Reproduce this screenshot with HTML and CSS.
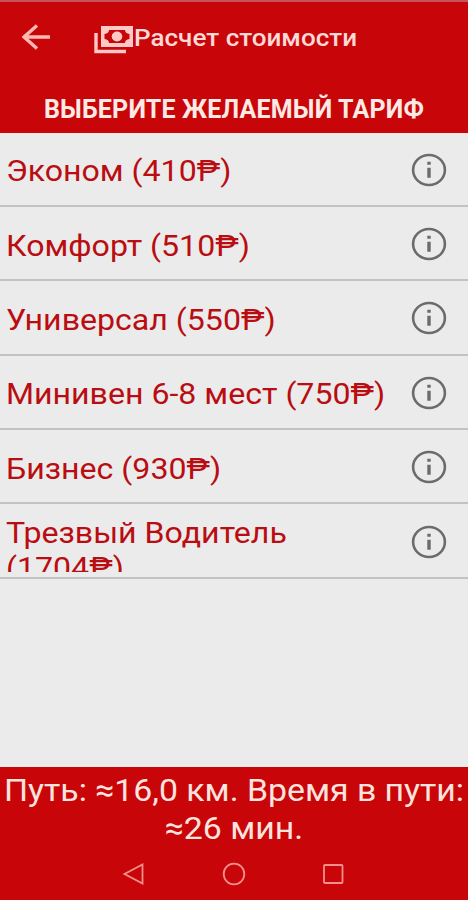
FILE: index.html
```html
<!DOCTYPE html>
<html lang="ru">
  <head>
    <meta charset="UTF-8" />
    <meta name="viewport" content="width=device-width, initial-scale=1.0" />
    <title>Расчет стоимости</title>
    <link rel="stylesheet" href="styles.css">
  </head>
  <body>
    <svg class="sprite" aria-hidden="true">
      <symbol id="info" viewBox="0 0 36 34">
        <ellipse cx="18" cy="17" rx="15.9" ry="15" fill="none" stroke="currentColor" stroke-width="2.6" />
        <path d="M16.3 14.8h3.4v10h-3.4zM16.3 8.800h3.4v3h-3.4z" fill="currentColor" />
      </symbol>
    </svg>

    <header class="toolbar">
      <svg class="back-icon" viewBox="0 0 28 26">
        <path d="M28 13H2M15 1.500L2 13l13 11.500" />
      </svg>
      <svg class="money-icon" viewBox="0 0 40 28">
        <path d="M2 7v18.500h30" fill="none" stroke="currentColor" stroke-width="3.4" />
        <path fill="currentColor" fill-rule="evenodd" d="M7 0h32v21H7zM15 4a5 4 0 0 1-4.500 4v5a5 4 0 0 1 4.500 4h16a5 4 0 0 1 4.500-4V8a5 4 0 0 1-4.500-4z" />
        <ellipse cx="23" cy="10.500" rx="5.300" ry="5" fill="currentColor" />
      </svg>
      <h1 class="title">Расчет стоимости</h1>
    </header>

    <h2 class="subtitle">ВЫБЕРИТЕ ЖЕЛАЕМЫЙ ТАРИФ</h2>

    <main class="tariffs">
      <div class="tariff">
        <div class="name">Эконом (410₱)</div>
        <svg class="info-icon"><use href="#info" /></svg>
      </div>
      <div class="tariff">
        <div class="name">Комфорт (510₱)</div>
        <svg class="info-icon"><use href="#info" /></svg>
      </div>
      <div class="tariff">
        <div class="name">Универсал (550₱)</div>
        <svg class="info-icon"><use href="#info" /></svg>
      </div>
      <div class="tariff">
        <div class="name">Минивен 6-8 мест (750₱)</div>
        <svg class="info-icon"><use href="#info" /></svg>
      </div>
      <div class="tariff">
        <div class="name">Бизнес (930₱)</div>
        <svg class="info-icon"><use href="#info" /></svg>
      </div>
      <div class="tariff">
        <div class="name name-long">Трезвый Водитель<br />(1704₱)</div>
        <svg class="info-icon"><use href="#info" /></svg>
      </div>
    </main>

    <footer class="summary">
      <p class="route">Путь: ≈16,0 км. Время в пути:<br />≈26 мин.</p>
      <nav class="system-nav">
        <svg viewBox="0 0 24 24"><path d="M20.500 2.500v19L2.500 12z" /></svg>
        <svg viewBox="0 0 24 24"><circle cx="12" cy="12" r="10.300" /></svg>
        <svg viewBox="0 0 24 24"><rect x="2" y="3" width="18.500" height="18" rx="1" /></svg>
      </nav>
    </footer>
  </body>
</html>
```
FILE: styles.css
```css
* {
  box-sizing: border-box;
}

body {
  margin: 0;
  height: 900px;
  display: flex;
  flex-direction: column;
  overflow: hidden;
  background-color: #ebebeb;
  font-family: Roboto, "Liberation Sans", sans-serif;
}

.sprite {
  display: none;
}

.toolbar {
  height: 74px;
  padding-left: 22px;
  display: flex;
  align-items: center;
  background-color: #c80508;
  border-top: 2px solid #c4545a;
  color: #ffd9d6;
}

.back-icon {
  width: 28px;
  height: 26px;
  margin-right: 44px;
  margin-bottom: 3px;
  fill: none;
  stroke: #ffb9b4;
  stroke-width: 3.4;
}

.money-icon {
  width: 40px;
  height: 28px;
  margin-top: 3px;
  color: #ffc9c6;
}

.title {
  margin: 0;
  font-size: 24px;
  font-weight: 500;
  line-height: 30px;
  white-space: nowrap;
  transform: scaleX(1.085);
  transform-origin: left;
}

.subtitle {
  margin: 0;
  height: 58.5px;
  padding-top: 21px;
  background-color: #c80508;
  color: #ffe9e4;
  font-size: 25px;
  font-weight: 700;
  line-height: 30px;
  letter-spacing: 0.18px;
  text-align: center;
  white-space: nowrap;
}

.tariffs {
  flex: 1;
}

.tariff {
  height: 74.4px;
  padding: 2px 21px 0 6px;
  display: flex;
  align-items: center;
  justify-content: space-between;
  border-bottom: 2px solid #c2c2c2;
}

.name {
  padding-top: 3px;
  color: #b90d12;
  font-size: 30px;
  line-height: 36px;
  white-space: nowrap;
  transform: scaleX(1.07);
  transform-origin: left;
}

.name-long {
  height: 60px;
  line-height: 35px;
  overflow: hidden;
}

.info-icon {
  width: 36px;
  height: 34px;
  flex-shrink: 0;
  color: #6b6b6b;
}

.summary {
  height: 133px;
  padding-top: 5px;
  background-color: #c80508;
}

.route {
  margin: 0;
  color: #ffe3df;
  font-size: 31.5px;
  line-height: 37.5px;
  text-align: center;
  white-space: nowrap;
  transform: scaleX(1.073);
}

.system-nav {
  margin-top: 15px;
  display: flex;
  justify-content: center;
  gap: 76px;
}

.system-nav svg {
  width: 24px;
  height: 24px;
  fill: none;
  stroke: #f58f8c;
  stroke-width: 1.8;
}
```
